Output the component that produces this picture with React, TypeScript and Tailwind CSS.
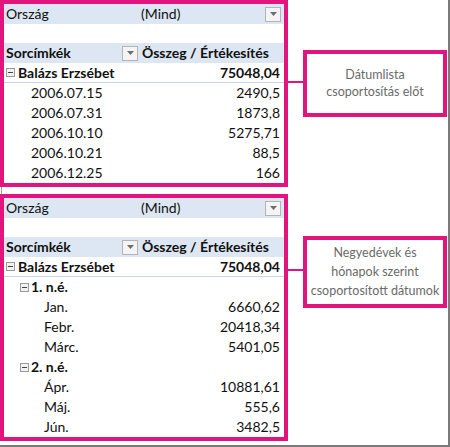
import React from "react";

type Row = { label: string; value?: string; kind: "total" | "group" | "item" | "date" };

const PINK = "border-[#e2147e]";

const firstRows: Row[] = [
    { label: "Balázs Erzsébet", value: "75048,04", kind: "total" },
    { label: "2006.07.15", value: "2490,5", kind: "date" },
    { label: "2006.07.31", value: "1873,8", kind: "date" },
    { label: "2006.10.10", value: "5275,71", kind: "date" },
    { label: "2006.10.21", value: "88,5", kind: "date" },
    { label: "2006.12.25", value: "166", kind: "date" },
];

const secondRows: Row[] = [
    { label: "Balázs Erzsébet", value: "75048,04", kind: "total" },
    { label: "1. n.é.", kind: "group" },
    { label: "Jan.", value: "6660,62", kind: "item" },
    { label: "Febr.", value: "20418,34", kind: "item" },
    { label: "Márc.", value: "5401,05", kind: "item" },
    { label: "2. n.é.", kind: "group" },
    { label: "Ápr.", value: "10881,61", kind: "item" },
    { label: "Máj.", value: "555,6", kind: "item" },
    { label: "Jún.", value: "3482,5", kind: "item" },
];

function DropButton() {
    return (
        <div className="w-[16px] h-[15px] border border-[#b4b4b4] bg-[#f4f4f4] flex items-center justify-center">
            <svg width="7" height="4" viewBox="0 0 7 4">
                <path d="M0 0 L7 0 L3.5 4 Z" fill="#6d6d6d" />
            </svg>
        </div>
    );
}

function MinusBox() {
    return (
        <div className="w-[9px] h-[9px] border border-[#9a9a9a] bg-[#f2f2f2] flex items-center justify-center shrink-0">
            <div className="w-[5px] h-[1px] bg-[#444]" />
        </div>
    );
}

function PivotBox({ rows }: { rows: Row[] }) {
    return (
        <div className={`w-[288px] border-4 ${PINK} bg-white text-[#111] font-['Lato',sans-serif] text-[14px] leading-[20px]`}>
            {/* szűrő sor */}
            <div className="h-[20px] bg-[#dde7f3] flex items-center">
                <div className="w-[135px] pl-[2px]">Ország</div>
                <div className="flex-1 pl-[2px]">(Mind)</div>
                <div className="pr-[3px]"><DropButton /></div>
            </div>
            <div className="h-[19px]" />
            {/* fejléc */}
            <div className="h-[20px] bg-[#dde7f3] flex items-center font-bold">
                <div className="w-[135px] pl-[2px] flex items-center justify-between pr-[1px]">
                    <span>Sorcímkék</span>
                    <DropButton />
                </div>
                <div className="flex-1 pl-[3px]">Összeg / Értékesítés</div>
            </div>
            {rows.map((r, i) => (
                <div
                    key={i}
                    className={`h-[20px] flex items-center pr-[4px] ${r.kind === "total" ? "border-b border-[#c5d5ea] font-bold" : ""}`}
                >
                    {r.kind === "total" && (
                        <div className="flex items-center pl-[2px] gap-[3px]"><MinusBox /><span>{r.label}</span></div>
                    )}
                    {r.kind === "group" && (
                        <div className="flex items-center pl-[16px] gap-[2px] font-bold"><MinusBox /><span>{r.label}</span></div>
                    )}
                    {r.kind === "item" && <div className="pl-[40px]">{r.label}</div>}
                    {r.kind === "date" && <div className="pl-[27px]">{r.label}</div>}
                    <div className="ml-auto">{r.value}</div>
                </div>
            ))}
        </div>
    );
}

function Callout({ lines, className }: { lines: string[]; className: string }) {
    return (
        <div className={`w-[144px] border-4 ${PINK} bg-white flex flex-col items-center justify-center text-[#6a6a6a] font-['Lato',sans-serif] font-normal text-[12.5px] ${className}`}>
            {lines.map((l) => (
                <div key={l}>{l}</div>
            ))}
        </div>
    );
}

export default function App() {
    return (
        <div className="w-[450px] h-[447px] bg-white border-r-2 border-b-2 border-[#7a7a7a] overflow-hidden">
            <div className="flex">
                <PivotBox rows={firstRows} />
                <div className="w-[15px] h-[2px] mt-[81px] bg-[#e2147e]" />
                <Callout lines={["Dátumlista", "csoportosítás előt"]} className="mt-[50px] h-[67px] leading-[17px] pb-[2px]" />
            </div>
            <div className="h-[7px] ml-[1px] border-l border-[#9a9a9a]" />
            <div className="flex">
                <PivotBox rows={secondRows} />
                <div className="w-[15px] h-[2px] mt-[75px] bg-[#e2147e]" />
                <Callout
                    lines={["Negyedévek és", "hónapok szerint", "csoportosított dátumok"]}
                    className="mt-[42px] h-[72px] leading-[19px] pb-[1px]"
                />
            </div>
        </div>
    );
}
